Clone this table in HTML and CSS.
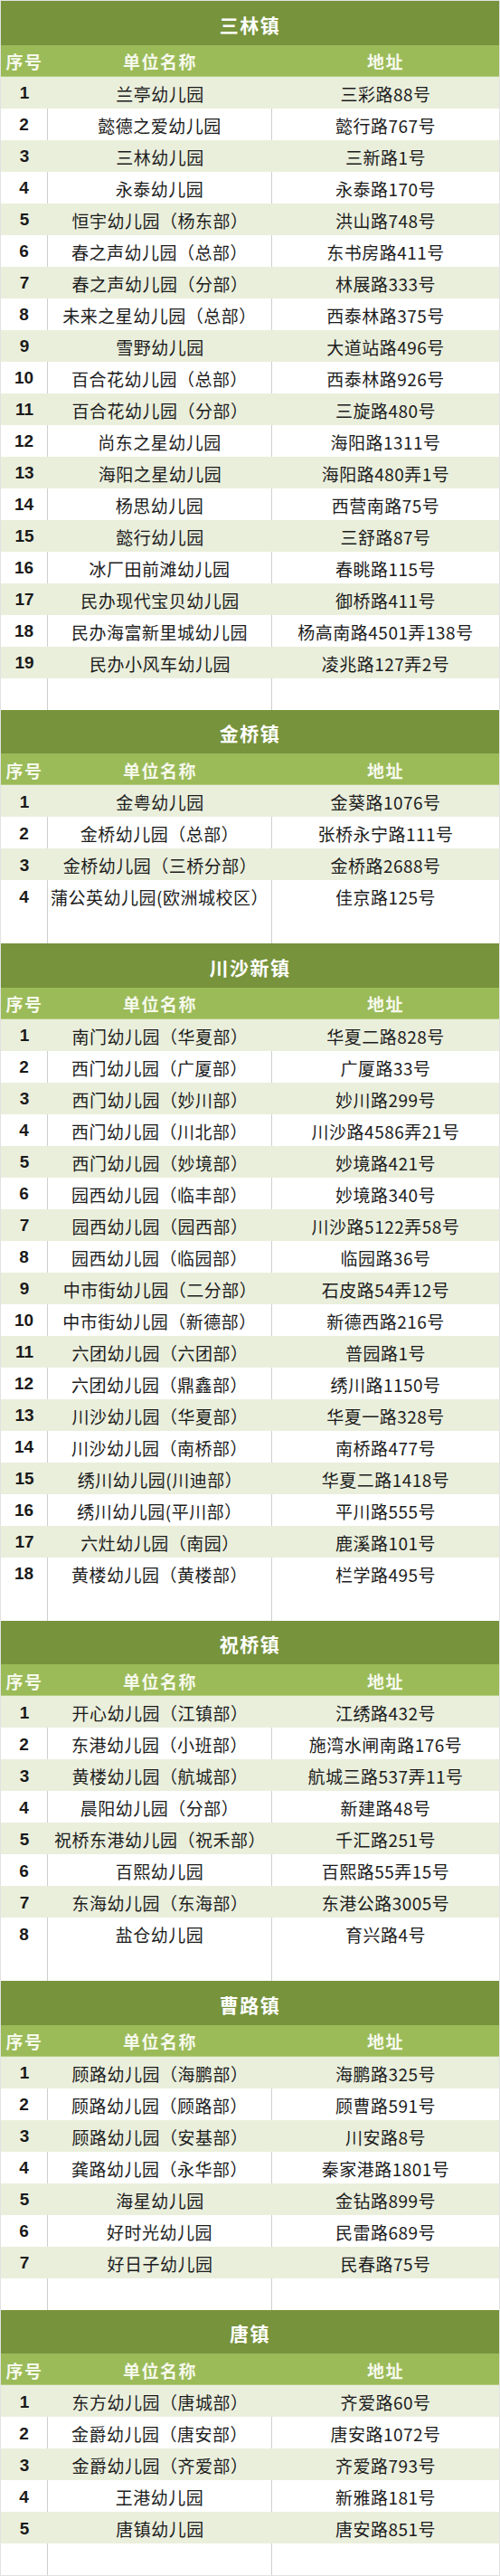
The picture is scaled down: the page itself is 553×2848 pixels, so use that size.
FILE: index.html
```html
<!DOCTYPE html>
<html lang="zh-CN">
<head>
<meta charset="utf-8">
<title>浦东幼儿园名单</title>
<link rel="stylesheet" href="styles.css">
</head>
<body>
<div class="sheet">

<section class="town">
  <div class="title">三林镇</div>
  <div class="row head"><div>序号</div><div>单位名称</div><div>地址</div></div>
  <div class="list">
    <div class="row"><div class="no">1</div><div>兰亭幼儿园</div><div>三彩路88号</div></div>
    <div class="row"><div class="no">2</div><div>懿德之爱幼儿园</div><div>懿行路767号</div></div>
    <div class="row"><div class="no">3</div><div>三林幼儿园</div><div>三新路1号</div></div>
    <div class="row"><div class="no">4</div><div>永泰幼儿园</div><div>永泰路170号</div></div>
    <div class="row"><div class="no">5</div><div>恒宇幼儿园（杨东部）</div><div>洪山路748号</div></div>
    <div class="row"><div class="no">6</div><div>春之声幼儿园（总部）</div><div>东书房路411号</div></div>
    <div class="row"><div class="no">7</div><div>春之声幼儿园（分部）</div><div>林展路333号</div></div>
    <div class="row"><div class="no">8</div><div>未来之星幼儿园（总部）</div><div>西泰林路375号</div></div>
    <div class="row"><div class="no">9</div><div>雪野幼儿园</div><div>大道站路496号</div></div>
    <div class="row"><div class="no">10</div><div>百合花幼儿园（总部）</div><div>西泰林路926号</div></div>
    <div class="row"><div class="no">11</div><div>百合花幼儿园（分部）</div><div>三旋路480号</div></div>
    <div class="row"><div class="no">12</div><div>尚东之星幼儿园</div><div>海阳路1311号</div></div>
    <div class="row"><div class="no">13</div><div>海阳之星幼儿园</div><div>海阳路480弄1号</div></div>
    <div class="row"><div class="no">14</div><div>杨思幼儿园</div><div>西营南路75号</div></div>
    <div class="row"><div class="no">15</div><div>懿行幼儿园</div><div>三舒路87号</div></div>
    <div class="row"><div class="no">16</div><div>冰厂田前滩幼儿园</div><div>春眺路115号</div></div>
    <div class="row"><div class="no">17</div><div>民办现代宝贝幼儿园</div><div>御桥路411号</div></div>
    <div class="row"><div class="no">18</div><div>民办海富新里城幼儿园</div><div>杨高南路4501弄138号</div></div>
    <div class="row"><div class="no">19</div><div>民办小风车幼儿园</div><div>凌兆路127弄2号</div></div>
  </div>
  <div class="row blank"><div></div><div></div><div></div></div>
</section>

<section class="town">
  <div class="title">金桥镇</div>
  <div class="row head"><div>序号</div><div>单位名称</div><div>地址</div></div>
  <div class="list">
    <div class="row"><div class="no">1</div><div>金粤幼儿园</div><div>金葵路1076号</div></div>
    <div class="row"><div class="no">2</div><div>金桥幼儿园（总部）</div><div>张桥永宁路111号</div></div>
    <div class="row"><div class="no">3</div><div>金桥幼儿园（三桥分部）</div><div>金桥路2688号</div></div>
    <div class="row"><div class="no">4</div><div>蒲公英幼儿园(欧洲城校区）</div><div>佳京路125号</div></div>
  </div>
  <div class="row blank"><div></div><div></div><div></div></div>
</section>

<section class="town">
  <div class="title">川沙新镇</div>
  <div class="row head"><div>序号</div><div>单位名称</div><div>地址</div></div>
  <div class="list">
    <div class="row"><div class="no">1</div><div>南门幼儿园（华夏部）</div><div>华夏二路828号</div></div>
    <div class="row"><div class="no">2</div><div>西门幼儿园（广厦部）</div><div>广厦路33号</div></div>
    <div class="row"><div class="no">3</div><div>西门幼儿园（妙川部）</div><div>妙川路299号</div></div>
    <div class="row"><div class="no">4</div><div>西门幼儿园（川北部）</div><div>川沙路4586弄21号</div></div>
    <div class="row"><div class="no">5</div><div>西门幼儿园（妙境部）</div><div>妙境路421号</div></div>
    <div class="row"><div class="no">6</div><div>园西幼儿园（临丰部）</div><div>妙境路340号</div></div>
    <div class="row"><div class="no">7</div><div>园西幼儿园（园西部）</div><div>川沙路5122弄58号</div></div>
    <div class="row"><div class="no">8</div><div>园西幼儿园（临园部）</div><div>临园路36号</div></div>
    <div class="row"><div class="no">9</div><div>中市街幼儿园（二分部）</div><div>石皮路54弄12号</div></div>
    <div class="row"><div class="no">10</div><div>中市街幼儿园（新德部）</div><div>新德西路216号</div></div>
    <div class="row"><div class="no">11</div><div>六团幼儿园（六团部）</div><div>普园路1号</div></div>
    <div class="row"><div class="no">12</div><div>六团幼儿园（鼎鑫部）</div><div>绣川路1150号</div></div>
    <div class="row"><div class="no">13</div><div>川沙幼儿园（华夏部）</div><div>华夏一路328号</div></div>
    <div class="row"><div class="no">14</div><div>川沙幼儿园（南桥部）</div><div>南桥路477号</div></div>
    <div class="row"><div class="no">15</div><div>绣川幼儿园(川迪部）</div><div>华夏二路1418号</div></div>
    <div class="row"><div class="no">16</div><div>绣川幼儿园(平川部）</div><div>平川路555号</div></div>
    <div class="row"><div class="no">17</div><div>六灶幼儿园（南园）</div><div>鹿溪路101号</div></div>
    <div class="row"><div class="no">18</div><div>黄楼幼儿园（黄楼部）</div><div>栏学路495号</div></div>
  </div>
  <div class="row blank"><div></div><div></div><div></div></div>
</section>

<section class="town">
  <div class="title">祝桥镇</div>
  <div class="row head"><div>序号</div><div>单位名称</div><div>地址</div></div>
  <div class="list">
    <div class="row"><div class="no">1</div><div>开心幼儿园（江镇部）</div><div>江绣路432号</div></div>
    <div class="row"><div class="no">2</div><div>东港幼儿园（小班部）</div><div>施湾水闸南路176号</div></div>
    <div class="row"><div class="no">3</div><div>黄楼幼儿园（航城部）</div><div>航城三路537弄11号</div></div>
    <div class="row"><div class="no">4</div><div>晨阳幼儿园（分部）</div><div>新建路48号</div></div>
    <div class="row"><div class="no">5</div><div>祝桥东港幼儿园（祝禾部）</div><div>千汇路251号</div></div>
    <div class="row"><div class="no">6</div><div>百熙幼儿园</div><div>百熙路55弄15号</div></div>
    <div class="row"><div class="no">7</div><div>东海幼儿园（东海部）</div><div>东港公路3005号</div></div>
    <div class="row"><div class="no">8</div><div>盐仓幼儿园</div><div>育兴路4号</div></div>
  </div>
  <div class="row blank"><div></div><div></div><div></div></div>
</section>

<section class="town">
  <div class="title">曹路镇</div>
  <div class="row head"><div>序号</div><div>单位名称</div><div>地址</div></div>
  <div class="list">
    <div class="row"><div class="no">1</div><div>顾路幼儿园（海鹏部）</div><div>海鹏路325号</div></div>
    <div class="row"><div class="no">2</div><div>顾路幼儿园（顾路部）</div><div>顾曹路591号</div></div>
    <div class="row"><div class="no">3</div><div>顾路幼儿园（安基部）</div><div>川安路8号</div></div>
    <div class="row"><div class="no">4</div><div>龚路幼儿园（永华部）</div><div>秦家港路1801号</div></div>
    <div class="row"><div class="no">5</div><div>海星幼儿园</div><div>金钻路899号</div></div>
    <div class="row"><div class="no">6</div><div>好时光幼儿园</div><div>民雷路689号</div></div>
    <div class="row"><div class="no">7</div><div>好日子幼儿园</div><div>民春路75号</div></div>
  </div>
  <div class="row blank"><div></div><div></div><div></div></div>
</section>

<section class="town">
  <div class="title">唐镇</div>
  <div class="row head"><div>序号</div><div>单位名称</div><div>地址</div></div>
  <div class="list">
    <div class="row"><div class="no">1</div><div>东方幼儿园（唐城部）</div><div>齐爱路60号</div></div>
    <div class="row"><div class="no">2</div><div>金爵幼儿园（唐安部）</div><div>唐安路1072号</div></div>
    <div class="row"><div class="no">3</div><div>金爵幼儿园（齐爱部）</div><div>齐爱路793号</div></div>
    <div class="row"><div class="no">4</div><div>王港幼儿园</div><div>新雅路181号</div></div>
    <div class="row"><div class="no">5</div><div>唐镇幼儿园</div><div>唐安路851号</div></div>
  </div>
  <div class="row blank"><div></div><div></div><div></div></div>
</section>

</div>
</body>
</html>
```

FILE: styles.css
```css
html, body {
  margin: 0;
  padding: 0;
}

body {
  background: #e2e2e2;
  font-family: "Noto Sans CJK SC", "Noto Sans", sans-serif;
  color: #1c1c1c;
}

.sheet {
  width: 551px;
  margin-left: 1px;
  padding-top: 1px;
}

.title {
  height: 48.5px;
  background: #77933c;
  color: #ffffff;
  font-weight: 700;
  font-size: 21px;
  letter-spacing: 1.5px;
  display: flex;
  align-items: center;
  justify-content: center;
  padding-top: 3px;
  box-sizing: border-box;
}

.row {
  display: grid;
  grid-template-columns: 52px 248px 251px;
  height: 35px;
}

.row > div {
  display: flex;
  align-items: center;
  justify-content: center;
  white-space: nowrap;
  box-sizing: border-box;
  font-size: 19px;
  letter-spacing: 0.5px;
  padding-top: 2px;
}

.head {
  background: #9bbb59;
  border-bottom: 1px solid #b3cc80;
  box-sizing: border-box;
}

.head > div {
  color: #f6f9ec;
  font-weight: 700;
  letter-spacing: 1.5px;
}

.list .row:nth-child(odd) {
  background: #eaefdc;
}

.list .row:nth-child(even),
.blank {
  background: #ffffff;
}

.list .row:nth-child(even) > div:nth-child(-n+2),
.blank > div:nth-child(-n+2) {
  border-right: 1px solid #cfcfcf;
}

.row > .no {
  font-family: "Liberation Sans", Arial, sans-serif;
  font-weight: 700;
  font-size: 19px;
  letter-spacing: 0;
  color: #1a1a1a;
}
```
